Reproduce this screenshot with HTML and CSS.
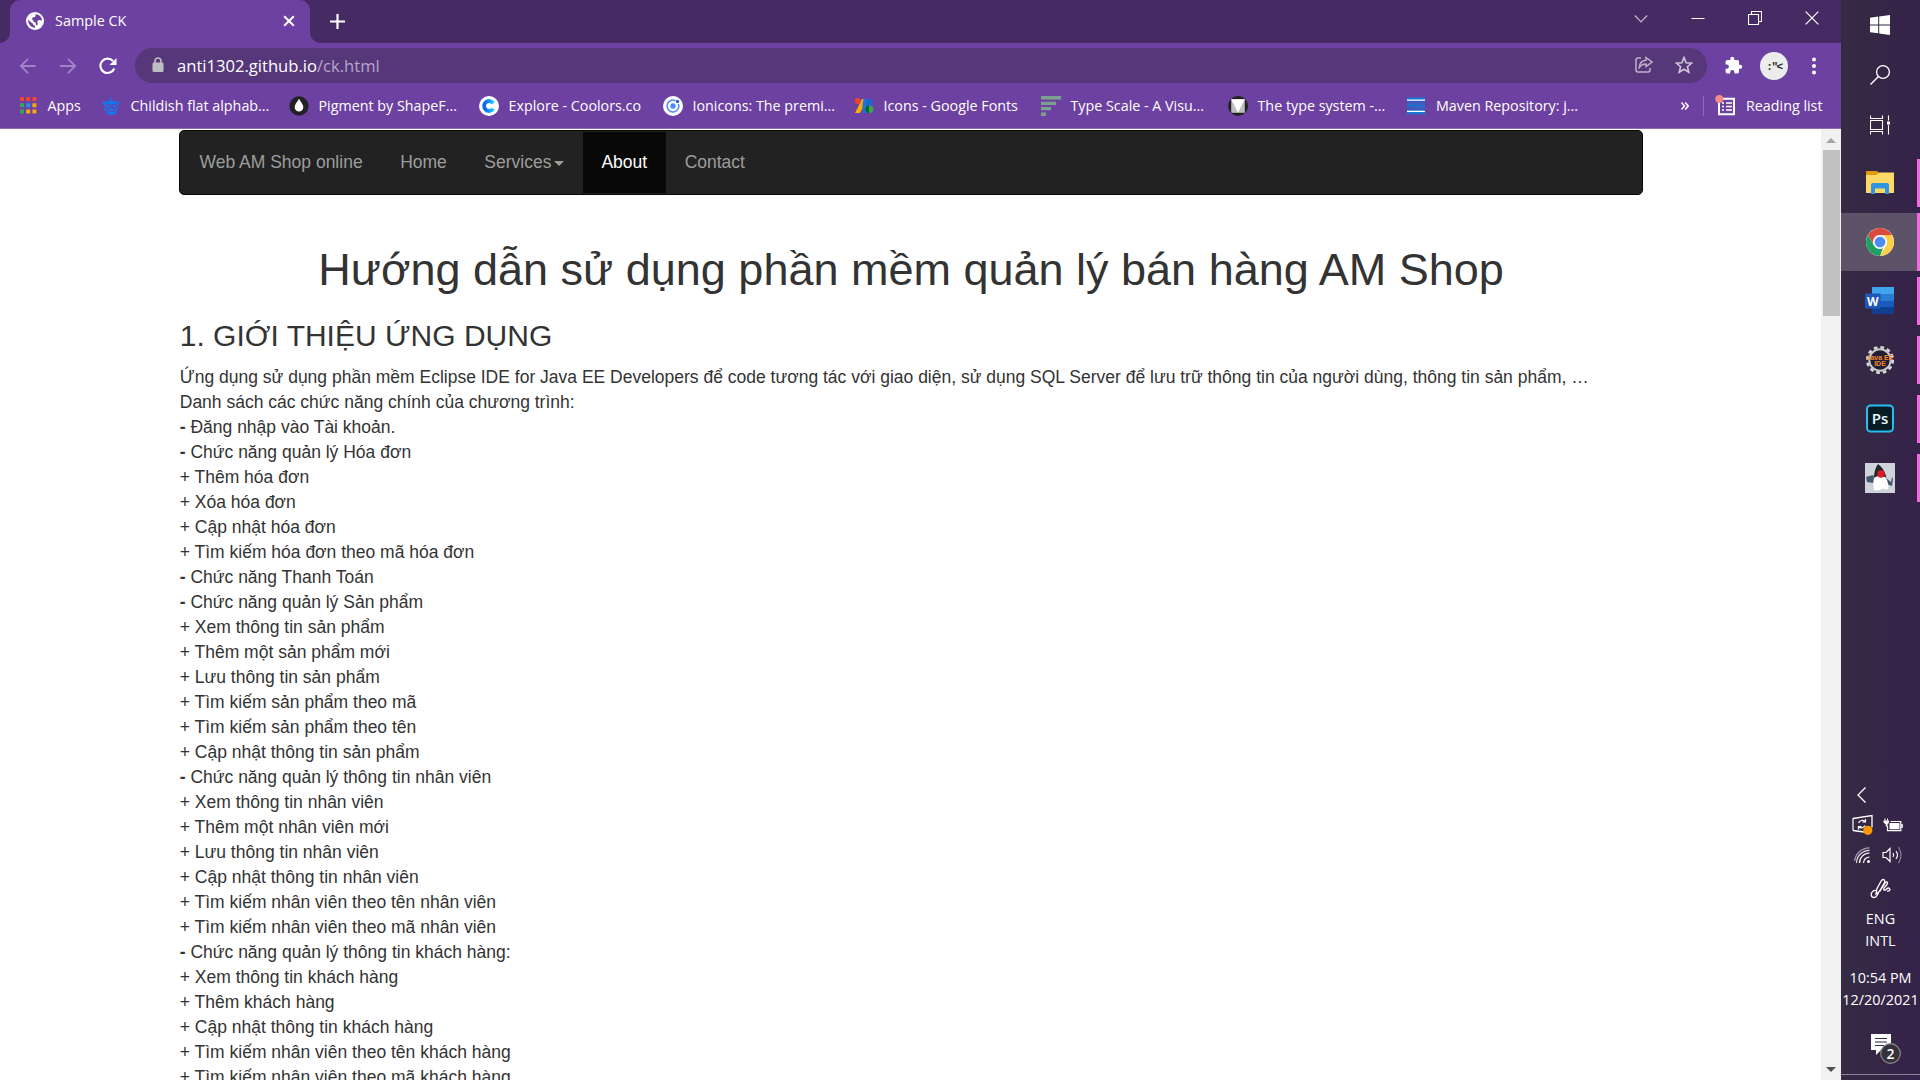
FILE: index.html
```html
<!DOCTYPE html>
<html lang="vi">
<head>
<meta charset="utf-8">
<title>Sample CK</title>
<link rel="stylesheet" href="styles.css">
</head>
<body>
<div class="desktop">
  <div class="browser">
    <div class="titlebar">
      <div class="tab">
        <svg class="tab-icon" width="18" height="18" viewBox="0 0 18 18"><circle cx="9" cy="9" r="9" fill="#fff"/><path d="M2 7.500c0 4.500 3 8 7 8.300v-2c-1.500 0-2-1-2-2l-3-2.300zM6 6.500c1-2 3-.5 3.500-2.500V2.200c4 0 6.500 3 6.500 6.500-2-1-3.500-1-4.500.3-1 1.500.5 2 .5 3s-1.500 1-2 1c.5-2-1-3-2.500-3.500S6.500 8.500 8 8C7 8 6 7.500 6 6.500z" fill="#6c41a1"/></svg>
        <span class="tab-title">Sample CK</span>
        <svg class="tab-close" width="12" height="12" viewBox="0 0 12 12"><path d="M1.200 1.200l9.600 9.600M10.800 1.200L1.200 10.800" stroke="#fff" stroke-width="2"/></svg>
      </div>
      <svg class="new-tab" width="15" height="15" viewBox="0 0 15 15"><path d="M7.500 0v15M0 7.500h15" stroke="#fff" stroke-width="2.200"/></svg>
      <div class="window-controls">
        <svg width="14" height="14" viewBox="0 0 14 14"><path d="M.8 4.500L7 11l6.200-6.500" fill="none" stroke="#c3b8ce" stroke-width="1.200"/></svg>
        <svg width="14" height="14" viewBox="0 0 14 14"><path d="M.5 7.500h13" stroke="#fff"/></svg>
        <svg width="14" height="14" viewBox="0 0 14 14"><path d="M.5 3.500h10v10H.5zM3.500 3.500v-3h10v10h-3" fill="none" stroke="#fff" stroke-width="1.100"/></svg>
        <svg width="14" height="14" viewBox="0 0 14 14"><path d="M.7.700l12.600 12.600M13.300.700L.7 13.300" stroke="#fff" stroke-width="1.200"/></svg>
      </div>
    </div>
    <div class="toolbar">
      <svg class="nav-icon" width="18" height="18" viewBox="0 0 18 18"><path d="M16.500 9H2M9 1.800L1.800 9 9 16.200" fill="none" stroke="#a284c6" stroke-width="1.800"/></svg>
      <svg class="nav-icon" width="18" height="18" viewBox="0 0 18 18"><path d="M1 9h15M9 1.800L16.200 9 9 16.200" fill="none" stroke="#a284c6" stroke-width="1.800"/></svg>
      <svg class="nav-icon" width="18" height="18" viewBox="0 0 18 18"><path d="M15.300 11.500A7.200 7.200 0 1 1 14 4" fill="none" stroke="#fff" stroke-width="2.100"/><path d="M17.500 1v7h-7z" fill="#fff"/></svg>
      <div class="omnibox">
        <svg class="lock" width="12" height="16" viewBox="0 0 12 16"><path d="M3 7V4a3 3 0 0 1 6 0v3" fill="none" stroke="#bdbdc3" stroke-width="1.600"/><rect x=".5" y="5.500" width="11" height="9.500" rx="1.200" fill="#bdbdc3"/></svg>
        <span class="url">anti1302.github.io<span class="url-path">/ck.html</span></span>
        <svg class="share" width="18" height="18" viewBox="0 0 18 18"><path d="M6 2H3a2 2 0 0 0-2 2v10a2 2 0 0 0 2 2h10a2 2 0 0 0 2-2v-2" fill="none" stroke="#bfb3cc" stroke-width="1.500"/><path d="M11 1.500L17 6l-6 4.500V8C8 8 6 9 4.300 11.500 4.500 7.500 7 4.500 11 4.200z" fill="none" stroke="#bfb3cc" stroke-width="1.400"/></svg>
        <svg class="star" width="18" height="18" viewBox="0 0 18 18"><path d="M9 1.500l2.100 5.200 5.600.4-4.300 3.600 1.400 5.500L9 13.200l-4.800 3 1.400-5.500L1.300 7.100l5.600-.4z" fill="none" stroke="#cfc6d8" stroke-width="1.600"/></svg>
      </div>
      <svg class="puzzle" width="19" height="19" viewBox="0 0 24 24"><path fill="#fff" d="M20.500 11H19V7a2 2 0 0 0-2-2h-4V3.500a2.500 2.500 0 0 0-5 0V5H4a2 2 0 0 0-2 2v3.800h1.500a2.700 2.700 0 0 1 0 5.400H2V20a2 2 0 0 0 2 2h3.800v-1.500a2.700 2.700 0 0 1 5.400 0V22H17a2 2 0 0 0 2-2v-4h1.500a2.500 2.500 0 0 0 0-5z"/></svg>
      <div class="avatar">:"&lt;</div>
      <svg class="kebab" width="4" height="18" viewBox="0 0 4 18"><g fill="#fff"><circle cx="2" cy="2.500" r="2"/><circle cx="2" cy="9" r="2"/><circle cx="2" cy="15.500" r="2"/></g></svg>
    </div>
    <div class="bookmarks">
      <div class="bookmark bm-apps"><svg width="20" height="20" viewBox="0 0 20 20"><path fill="#f44336" d="M2 1h4v4H2zM8.200 1h4v4h-4zM14.400 1h4v4h-4z"/><path fill="#31a852" d="M2 7.300h4v4H2zM2 13.600h4v4H2z"/><path fill="#2a8cf0" d="M8.200 7.300h4v4h-4z"/><path fill="#fba80a" d="M14.400 7.300h4v4h-4zM8.200 13.600h4v4h-4zM14.400 13.600h4v4h-4z"/></svg><span>Apps</span></div>
      <div class="bookmark bm-flat"><svg width="20" height="20" viewBox="0 0 20 20"><path fill="#1675ec" d="M9.500 1h1.300v3.500c1.800.1 3.200.6 4.200 1.500l4-1-1.500 3 .3 1.500-1.500.5c1 5.500-1.300 9-6 9s-7.500-3.500-6.500-9L2.300 9.500 2.500 8 1 5l4 1c1-.9 2.500-1.400 4.500-1.500z"/><path fill="none" stroke="#6547ac" stroke-width="1.200" d="M5 10.500a2.200 2 0 1 0 4.500 0 2.200 2 0 1 0-4.500 0M11 10.500a2.200 2 0 1 0 4.500 0 2.200 2 0 1 0-4.500 0M4.500 14.500Q10 16.500 15.500 14.500"/></svg><span>Childish flat alphab...</span></div>
      <div class="bookmark bm-pigment"><svg width="20" height="20" viewBox="0 0 20 20"><circle cx="10" cy="10" r="9.700" fill="#222226"/><path fill="#fff" d="M10 2.800c1.500 3 4.300 5.500 4.300 8.500a4.300 4.300 0 0 1-8.600 0c0-3 2.800-5.500 4.300-8.500z"/></svg><span>Pigment by ShapeF...</span></div>
      <div class="bookmark bm-coolors"><svg width="20" height="20" viewBox="0 0 20 20"><defs><linearGradient id="cool"><stop offset="0" stop-color="#0a60f5"/><stop offset="1" stop-color="#19c9fa"/></linearGradient></defs><circle cx="10" cy="10" r="10" fill="#fff"/><path d="M14.300 7.200a5 5 0 1 0 0 5.600" fill="none" stroke="url(#cool)" stroke-width="3.800"/></svg><span>Explore - Coolors.co</span></div>
      <div class="bookmark bm-ion"><svg width="20" height="20" viewBox="0 0 20 20"><circle cx="10" cy="10" r="10" fill="#fff"/><circle cx="10" cy="10" r="2.700" fill="#4b8dff"/><path d="M12.500 4.700A5.900 5.900 0 1 0 15.500 8" fill="none" stroke="#4b8dff" stroke-width="1.500"/><circle cx="14.500" cy="5.500" r="1.700" fill="#2860c8"/></svg><span>Ionicons: The premi...</span></div>
      <div class="bookmark bm-gf"><svg width="20" height="20" viewBox="0 0 20 20"><path fill="#f9ab00" d="M8 3h4v3L6 17H1z"/><path fill="#1a73e8" d="M9.500 3H15v14H8.500V9z"/><circle cx="3.700" cy="5" r="3" fill="#ea4335"/><circle cx="15" cy="6.500" r="3.500" fill="#1967d2"/><circle cx="15.500" cy="13.300" r="3.800" fill="#34a853"/><path d="M15 9.600v7.400a3.700 3.700 0 0 1 0-7.400" fill="#0d652d"/></svg><span>Icons - Google Fonts</span></div>
      <div class="bookmark bm-scale"><svg width="20" height="20" viewBox="0 0 20 20"><path fill="#7aa18e" d="M0 0h20v3.500H0zM0 5.700h15v3.300H0zM0 11h10v3.300H0zM0 16.500h5V20H0z"/></svg><span>Type Scale - A Visu...</span></div>
      <div class="bookmark bm-system"><svg width="20" height="20" viewBox="0 0 20 20"><circle cx="10" cy="10" r="10" fill="#212121"/><path fill="#bdbdbd" d="M3.200 3.200h13.600v13.600H3.200z"/><path fill="#fff" d="M3.200 3.200h13.600L10 16.800z"/></svg><span>The type system -...</span></div>
      <div class="bookmark bm-maven"><svg width="18" height="20" viewBox="0 0 18 20"><path fill="#1976d2" d="M0 1.500h18v16.800H0z"/><path fill="#6045aa" d="M0 5.500h18v8.300H0z"/><path stroke="#fff" stroke-width="1.300" d="M0 4.200h18M0 15.300h18"/><path d="M1 13.200V7l2 3 2-3v6.200M7.300 6.500v6.700M10.700 6.500v6.700M7.300 10h3.400M13 13.200V7l4 6V6.500" fill="none" stroke="#1976d2" stroke-width="1.500"/></svg><span>Maven Repository: j...</span></div>
      <svg class="overflow" width="8" height="8" viewBox="0 0 8 8"><path d="M.5.500L3.500 4l-3 3.500M4.200.500L7.200 4l-3 3.500" fill="none" stroke="#fff" stroke-width="1.500"/></svg>
      <div class="divider"></div>
      <svg class="reading-icon" width="21" height="21" viewBox="0 0 21 21"><path d="M4 3.700h15v15.600H4z" fill="none" stroke="#fff" stroke-width="2"/><path d="M7 8h2M11 8h6M7 11.500h2M11 11.500h6M7 15h2M11 15h6" stroke="#fff" stroke-width="1.500"/><circle cx="4.300" cy="4" r="4" fill="#f28b82"/></svg>
      <span class="reading-label">Reading list</span>
    </div>
    <div class="viewport">
      <div class="page">
        <nav class="navbar">
          <span>Web AM Shop online</span>
          <span>Home</span>
          <span>Services<i class="caret"></i></span>
          <span class="active">About</span>
          <span>Contact</span>
        </nav>
        <h1>Hướng dẫn sử dụng phần mềm quản lý bán hàng AM Shop</h1>
        <h3>1. GIỚI THIỆU ỨNG DỤNG</h3>
        <p>Ứng dụng sử dụng phần mềm Eclipse IDE for Java EE Developers để code tương tác với giao diện, sử dụng SQL Server để lưu trữ thông tin của người dùng, thông tin sản phẩm, …<br>
        Danh sách các chức năng chính của chương trình:<br>
        <b>-</b> Đăng nhập vào Tài khoản.<br>
        <b>-</b> Chức năng quản lý Hóa đơn<br>
        + Thêm hóa đơn<br>
        + Xóa hóa đơn<br>
        + Cập nhật hóa đơn<br>
        + Tìm kiếm hóa đơn theo mã hóa đơn<br>
        <b>-</b> Chức năng Thanh Toán<br>
        <b>-</b> Chức năng quản lý Sản phẩm<br>
        + Xem thông tin sản phẩm<br>
        + Thêm một sản phẩm mới<br>
        + Lưu thông tin sản phẩm<br>
        + Tìm kiếm sản phẩm theo mã<br>
        + Tìm kiếm sản phẩm theo tên<br>
        + Cập nhật thông tin sản phẩm<br>
        <b>-</b> Chức năng quản lý thông tin nhân viên<br>
        + Xem thông tin nhân viên<br>
        + Thêm một nhân viên mới<br>
        + Lưu thông tin nhân viên<br>
        + Cập nhật thông tin nhân viên<br>
        + Tìm kiếm nhân viên theo tên nhân viên<br>
        + Tìm kiếm nhân viên theo mã nhân viên<br>
        <b>-</b> Chức năng quản lý thông tin khách hàng:<br>
        + Xem thông tin khách hàng<br>
        + Thêm khách hàng<br>
        + Cập nhật thông tin khách hàng<br>
        + Tìm kiếm nhân viên theo tên khách hàng<br>
        + Tìm kiếm nhân viên theo mã khách hàng</p>
      </div>
      <div class="scrollbar">
        <svg width="10" height="5" viewBox="0 0 10 5"><path d="M5 0l5 5H0z" fill="#a3a3a3"/></svg>
        <div class="thumb"></div>
        <svg class="down" width="10" height="5" viewBox="0 0 10 5"><path d="M0 0h10L5 5z" fill="#505050"/></svg>
      </div>
    </div>
  </div>
  <div class="taskbar">
    <div class="system">
      <svg width="20" height="20" viewBox="0 0 20 20"><path fill="#fff" d="M0 2.800L8.200 1.600v7.800H0zM9.200 1.500L20 0v9.400H9.200zM0 10.400h8.200v7.900L0 17.200zM9.200 10.400H20V20L9.200 18.500z"/></svg>
      <svg width="20" height="20" viewBox="0 0 20 20"><circle cx="13" cy="7" r="6.400" fill="none" stroke="#fff" stroke-width="1.300"/><path d="M8.400 11.600L.5 19.500" stroke="#fff" stroke-width="1.400"/></svg>
      <svg width="20" height="20" viewBox="0 0 20 20"><path d="M.5.500v3h12v-3M.5 19.500v-3h12v3M.5 5.500h12v9H.5zM18.500.5v5M18.500 10v9.500" fill="none" stroke="#fff" stroke-width="1.100"/><path fill="#fff" d="M17 6.500h3v3h-3z"/></svg>
    </div>
    <div class="task"><svg width="30" height="30" viewBox="0 0 30 30"><path fill="#e19a04" d="M1 3h11l2 2-2 3H1z"/><path fill="#ffd967" d="M1 7h10l3-2.500h15V25H1z"/><path fill="#3194df" d="M6 26V17q0-2 2-2h14q2 0 2 2v9h-4v-5.500h-10V26z"/></svg></div>
    <div class="task current"><svg width="30" height="30" viewBox="0 0 30 30"><circle cx="15" cy="15" r="14" fill="#fff"/><path fill="#db4a3f" d="M2.900 8A14 14 0 0 1 27.100 8H15a7 7 0 0 0-6.100 10.500z"/><path fill="#ffce44" d="M27.100 8A14 14 0 0 1 15 29l6.100-10.500A7 7 0 0 0 15 8z"/><path fill="#1da061" d="M15 29A14 14 0 0 1 2.900 8l6 10.500A7 7 0 0 0 18 21.300z"/><circle cx="15" cy="15" r="6.600" fill="#f1f5f3"/><circle cx="15" cy="15" r="5.300" fill="#4c8bf5"/></svg></div>
    <div class="task"><svg width="30" height="30" viewBox="0 0 30 30"><path fill="#41a5ee" d="M7 1h22v7H7z"/><path fill="#2b7cd3" d="M7 8h22v7H7z"/><path fill="#185abd" d="M7 15h22v6H7z"/><path fill="#103f91" d="M7 21h22v7H7z"/><path fill="#1b58b9" d="M0 7.500h15.500v15H0z"/><text class="word" x="7.700" y="19.500">W</text></svg></div>
    <div class="task"><svg width="30" height="30" viewBox="0 0 30 30"><circle cx="15" cy="15" r="12.600" fill="none" stroke="#d5d5d5" stroke-width="3" stroke-dasharray="3.600 3"/><circle cx="15" cy="15" r="10.700" fill="#211d35" stroke="#c6c6c6" stroke-width="2"/><text class="jee" x="15" y="14.500">Java EE</text><text class="jee" x="15" y="20.500">IDE</text></svg></div>
    <div class="task"><svg width="30" height="30" viewBox="0 0 30 30"><rect x="2" y="1.500" width="26" height="26" rx="3.500" fill="#061d26" stroke="#27bdf0" stroke-width="2"/><text class="ps" x="15" y="20">Ps</text></svg></div>
    <div class="task"><svg width="30" height="30" viewBox="0 0 30 30"><path fill="#cfd3da" d="M0 0h30v30H0z"/><path fill="#45596e" d="M1 14l7-2 3 5-3 3-6-1zM21 15l5 4 1-5 1 2-1 7-6-2z"/><path fill="#fff" d="M10 12c3-2 8-2 10 1 3 5 4 11 3 13-3 1-4-1-6 0s-5 2-8 1c-1-5-1-11 1-15z"/><path fill="#24252a" d="M13 1c4 3 7 7 8.500 14-2-2-9-3-12.500 0 0-5 1-10 4-14z"/><circle cx="16" cy="11" r="3.700" fill="#e01a22"/></svg></div>
    <div class="tray">
      <svg class="chevron" width="10" height="18" viewBox="0 0 10 18"><path d="M8.500 1.500L1 9l7.500 7.500" fill="none" stroke="#fff" stroke-width="1.300"/></svg>
      <div class="tray-row">
        <svg width="22" height="22" viewBox="0 0 22 22"><path d="M1 4.500L20 1.500v12M12 18L1 16.500z" fill="none" stroke="#fff" stroke-width="1.300"/><path d="M1 4v12.500M6.500 9a4 4 0 0 1 6.500-1.500M13.500 5v3h-3M13 11.500a4 4 0 0 1-6 1.500M6.500 15.500v-3h3" fill="none" stroke="#fff" stroke-width="1.200"/><circle cx="15.800" cy="16.300" r="4.600" fill="#ff9800"/></svg>
        <svg width="20" height="14" viewBox="0 0 20 14"><path d="M7.500 3.500h10.300v9.200H4.500V8" fill="none" stroke="#fff" stroke-width="1.200"/><path d="M2 .5v2M4.500.5v2" stroke="#fff"/><path fill="#fff" d="M.5 2.500h5.500v2L4.500 6.500v2H2.800v-2L.5 4.500zM6.500 5h10v6.200H6.500zM18.300 6h1.500v4h-1.500z"/></svg>
      </div>
      <div class="tray-row tray-row-net">
        <svg width="17" height="17" viewBox="0 0 17 17"><g fill="none" stroke="#fff" stroke-width="1.200"><path d="M9.500 16a6 6 0 0 1 6-6M5.500 16a10 10 0 0 1 10-10"/><path d="M2.500 16A13 13 0 0 1 15.500 3.300" stroke="#e0dce4"/><path stroke="#a79fb0" d="M.6 14A15 15 0 0 1 15.500.8"/></g><circle cx="14.500" cy="14.500" r="1.500" fill="#fff"/></svg>
        <svg width="21" height="18" viewBox="0 0 21 18"><g fill="none" stroke="#fff" stroke-width="1.200"><path d="M1 6.500h3L8 2.500v13l-4-4H1zM11 7q1.500 2 0 4M14 5q3 4 0 8"/><path stroke="#8b8195" d="M16.500 1q5 8 0 16"/></g></svg>
      </div>
      <svg class="pen" width="22" height="22" viewBox="0 0 22 22"><path d="M6.500 12.500C3 12 1 14.500 1.200 17c.3 3 4.300 3.500 5.800.5L14.500 4.500c1-2.500-1-4-3-2L7 10.500 6 16l4-3 5.500-8.500c1.500-1.500 2.800 0 1.500 2L14 10c-1 2 .5 3 2 1.500s3-2.500 4 0c-.5 1.500-2 2-3 1.500" fill="none" stroke="#fff" stroke-width="1.300"/></svg>
      <div class="tray-text lang-text">ENG<br>INTL</div>
      <div class="tray-text clock">10:54 PM<br><span>12/20/2021</span></div>
      <svg class="notice" width="31" height="31" viewBox="0 0 31 31"><path fill="#fff" d="M1 1h20v16H11l-5 5v-5H1z"/><path d="M5 5.500h12M5 9h12M5 12.500h9" stroke="#35274a" stroke-width="1.200"/><circle cx="20.500" cy="20.500" r="9.800" fill="#353238" stroke="#8d8990" stroke-width="1.200"/><text class="count" x="20.500" y="25.500">2</text></svg>
    </div>
    <div class="show-desktop"></div>
  </div>
</div>
</body>
</html>
```
FILE: styles.css
```css
* { box-sizing: border-box; }
body { margin: 0; overflow: hidden; font-family: "Open Sans", "Noto Sans", sans-serif; }
svg { display: block; flex: none; }
.desktop { display: flex; width: 1920px; height: 1080px; overflow: hidden; }
.browser { display: flex; flex-direction: column; width: 1841px; height: 1080px; background: #6c41a1; }

.titlebar {
  display: flex;
  align-items: flex-start;
  height: 43px;
  padding-left: 10px;
  background-color: #462a63;
  background-image:
    radial-gradient(circle at 0 0, #462a63 9.500px, transparent 10px),
    linear-gradient(#6c41a1, #6c41a1),
    radial-gradient(circle at 100% 0, #462a63 9.500px, #6c41a1 10px);
  background-size: 10px 10px;
  background-position: 0 33px, 0 33px, 310px 33px;
  background-repeat: no-repeat;
}
.tab { display: flex; align-items: center; width: 300px; height: 43px; padding: 0 15px 1px 16px; border-radius: 10px 10px 0 0; background: #6c41a1; }
.tab-icon { margin-right: 11px; }
.tab-title { flex: 1; margin-top: -1px; color: #fff; font-size: 14.4px; }
.new-tab { margin: 14px 0 0 20px; }
.window-controls { display: flex; gap: 43px; margin: 11px 22px 0 auto; }

.toolbar { display: flex; align-items: center; height: 45px; padding-left: 19px; }
.nav-icon { margin-right: 22px; }
.nav-icon + .nav-icon + .nav-icon { margin-right: 18px; }
.omnibox { display: flex; align-items: center; width: 1572px; height: 35px; margin-top: -1px; padding: 0 14px 0 17px; border-radius: 18px; background: #55377a; }
.lock { margin-right: 13px; }
.url { flex: 1; color: #fff; font-size: 16.6px; }
.url-path { color: #b7a6ca; }
.share { margin-right: 22px; }
.puzzle { margin-left: 17px; }
.avatar { width: 28px; height: 28px; margin-left: 17px; border-radius: 50%; background: #ececec; color: #222; font: bold 11px/31px "Liberation Mono", monospace; letter-spacing: -1.500px; text-align: center; }
.kebab { margin-left: 24px; }

.bookmarks { display: flex; align-items: center; height: 41px; padding: 0 0 5px 18px; border-bottom: 1px solid #8e69b9; color: #fff; font-size: 14.3px; white-space: nowrap; }
.bookmark { display: flex; align-items: center; gap: 9.500px; flex: none; }
.bm-apps { width: 83px; }
.bm-flat { width: 188px; }
.bm-pigment { width: 190px; }
.bm-coolors { width: 184px; }
.bm-ion { width: 191px; }
.bm-gf { width: 187px; }
.bm-scale { width: 187px; }
.bm-system { width: 179px; }
.bm-maven { width: 274px; gap: 11px; }
.divider { width: 1px; height: 20px; margin: 0 11px 0 14px; background: #8e69b9; }
.reading-label { margin-left: 10px; }

.viewport { display: flex; height: 951px; overflow: hidden; background: #fff; }
.page { flex: 1; padding: 1px 178.500px 0 179.750px; color: #333; font: 17.5px/25px "Liberation Sans", Arial, sans-serif; white-space: nowrap; }
.navbar { display: flex; height: 65px; margin: 0 0 50px -1px; padding: 1px 0 1px 1px; border: 1px solid #080808; border-radius: 5px; background: #222; color: #9d9d9d; }
.navbar span { padding: 18px 18.750px; }
.navbar .active { background: #080808; color: #fff; }
.caret { display: inline-block; margin-left: 2.500px; border: 5px solid transparent; border-top-color: currentColor; border-bottom: 0; vertical-align: middle; }
h1 { margin: 0; font-size: 45px; line-height: 49.5px; font-weight: 400; text-align: center; }
h3 { margin: 24px 0 13px; font-size: 30px; line-height: 33px; font-weight: 400; }
p { margin: 0; }

.scrollbar { display: flex; flex-direction: column; align-items: center; width: 20px; padding: 9px 0 8px; background: #f1f1f1; }
.thumb { width: 17px; height: 166px; margin-top: 7px; background: #c1c1c1; }
.down { margin-top: auto; }

.taskbar { display: flex; flex-direction: column; width: 79px; height: 1080px; background: linear-gradient(90deg, #342b43, #352547 60%, #35224a); }
.system { display: flex; flex-direction: column; align-items: center; gap: 30px; height: 154px; padding: 15px 2px 0 0; }
.task { display: flex; align-items: center; justify-content: center; height: 58px; margin-bottom: 1px; padding-right: 1px; background: linear-gradient(#f26be0, #f26be0) right center / 3px 48px no-repeat; }
.current { background-color: #5d5369; background-size: 3px 58px; }
.jee { fill: #f28a28; font: bold 7px "Liberation Sans", sans-serif; text-anchor: middle; }
.word { fill: #fff; font: bold 12px "Open Sans", sans-serif; text-anchor: middle; }
.ps { fill: #e9f8ff; font: 600 15px "Open Sans", sans-serif; text-anchor: middle; }
.count { fill: #fff; font: 600 14px "Open Sans", sans-serif; text-anchor: middle; }
.tray { display: flex; flex-direction: column; align-items: center; margin-top: auto; color: #fff; }
.chevron { margin-right: 38px; margin-bottom: 6px; }
.tray-row { display: flex; align-items: center; justify-content: center; gap: 9px; height: 30px; padding-right: 6px; }
.tray-row-net { gap: 11px; padding-right: 4px; }
.pen { margin-top: 8px; }
.tray-text { font-size: 14.4px; line-height: 22px; text-align: center; white-space: nowrap; }
.lang-text { margin-top: 8px; }
.clock { margin-top: 15px; }
.notice { margin: 22px 0 10px 9px; }
.show-desktop { height: 6px; border-top: 1px solid #8b8494; }
```
